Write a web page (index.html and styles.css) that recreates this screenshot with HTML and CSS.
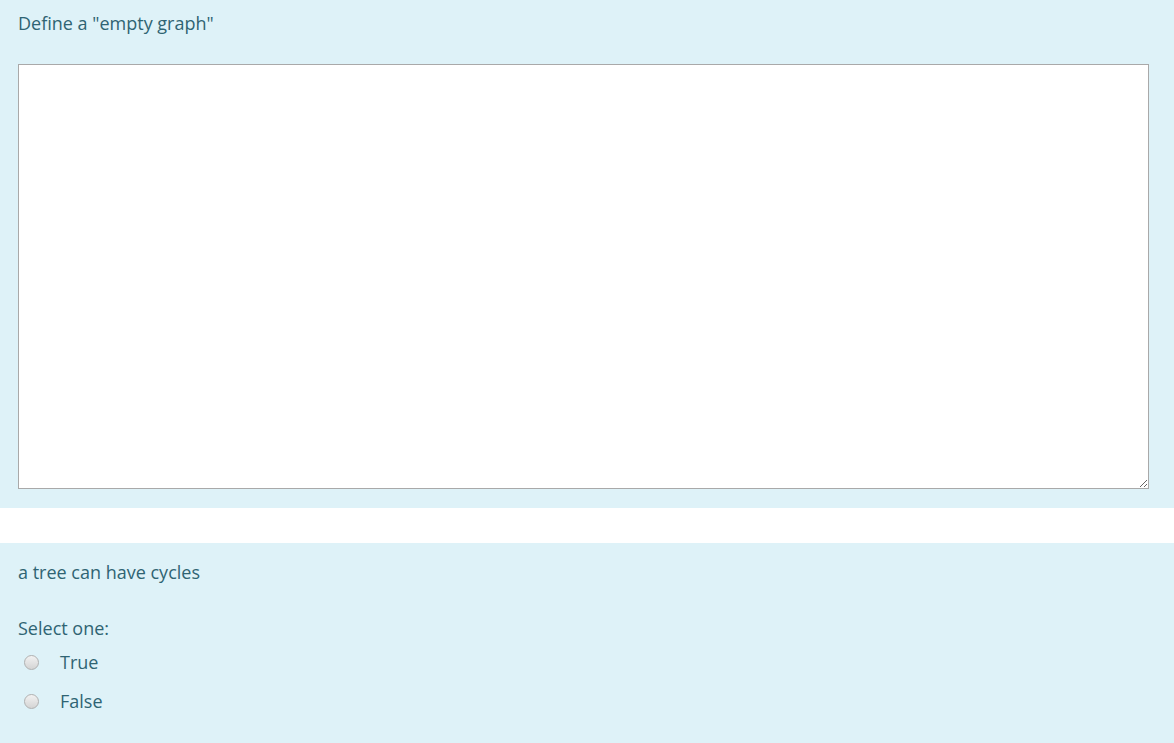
FILE: index.html
```html
<!DOCTYPE html>
<html lang="en">
<head>
    <meta charset="UTF-8">
    <title>Quiz</title>
    <link rel="stylesheet" href="styles.css">
</head>
<body>
    <div class="que essay">
        <div class="qtext">Define a "empty graph"</div>
        <textarea class="answer-box"></textarea>
    </div>

    <div class="que truefalse">
        <div class="qtext">a tree can have cycles</div>
        <div class="prompt">Select one:</div>
        <div class="choices">
            <label class="choice"><span class="radio"></span>True</label>
            <label class="choice"><span class="radio"></span>False</label>
        </div>
    </div>
</body>
</html>
```

FILE: styles.css
```css
body {
    margin: 0;
    font-family: "Open Sans", "Noto Sans", sans-serif;
    font-size: 18px;
    color: #2f6473;
    background: #fff;
}
.que {
    background-color: #def2f8;
    padding: 9px 25px 19px 18px;
}
.essay .qtext {
    line-height: 28px;
    margin-bottom: 27px;
}
.answer-box {
    display: block;
    width: 100%;
    box-sizing: border-box;
    height: 425px;
    margin: 0;
    border: 1px solid #a9a9a9;
    background: #fff;
    font-family: inherit;
}
.truefalse {
    margin-top: 35px;
    padding-top: 15px;
    padding-bottom: 40px;
}
.truefalse .qtext {
    line-height: 28px;
    margin-bottom: 28px;
}
.prompt {
    line-height: 28px;
    margin-bottom: 6px;
}
.choices {
    display: flex;
    flex-direction: column;
    gap: 11px;
}
.choice {
    display: flex;
    align-items: center;
    line-height: 28px;
    padding-left: 6px;
}
.radio {
    width: 13px;
    height: 13px;
    border: 1px solid #b0b0b0;
    border-radius: 50%;
    background: linear-gradient(#f2f2f2, #d4d4d4);
    margin-right: 21px;
}
```
